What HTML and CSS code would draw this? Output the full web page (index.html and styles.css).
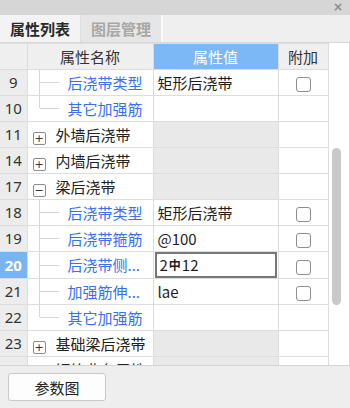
FILE: index.html
```html
<!DOCTYPE html>
<html lang="zh-CN">
<head>
    <meta charset="UTF-8">
    <title>属性列表</title>
    <link rel="stylesheet" href="styles.css">
</head>
<body>
    <div class="panel">
        <div class="titlebar"><span class="close">×</span></div>

        <div class="tabs">
            <div class="tab active">属性列表</div>
            <div class="tab">图层管理</div>
        </div>

        <div class="grid-wrap">
            <table class="grid">
                <colgroup>
                    <col class="c-num"><col class="c-name"><col class="c-val"><col class="c-add">
                </colgroup>
                <thead>
                    <tr>
                        <th></th>
                        <th>属性名称</th>
                        <th class="hl">属性值</th>
                        <th>附加</th>
                    </tr>
                </thead>
                <tbody>
                    <tr>
                        <td class="num">9</td>
                        <td class="name child"><span class="tree"></span>后浇带类型</td>
                        <td class="val">矩形后浇带</td>
                        <td class="add"><span class="check"></span></td>
                    </tr>
                    <tr>
                        <td class="num">10</td>
                        <td class="name child"><span class="tree last"></span>其它加强筋</td>
                        <td class="val"></td>
                        <td class="add"></td>
                    </tr>
                    <tr>
                        <td class="num">11</td>
                        <td class="name group"><span class="toggle">+</span>外墙后浇带</td>
                        <td class="val grey"></td>
                        <td class="add"></td>
                    </tr>
                    <tr>
                        <td class="num">14</td>
                        <td class="name group"><span class="toggle">+</span>内墙后浇带</td>
                        <td class="val grey"></td>
                        <td class="add"></td>
                    </tr>
                    <tr>
                        <td class="num">17</td>
                        <td class="name group"><span class="toggle">−</span>梁后浇带</td>
                        <td class="val grey"></td>
                        <td class="add"></td>
                    </tr>
                    <tr>
                        <td class="num">18</td>
                        <td class="name child"><span class="tree"></span>后浇带类型</td>
                        <td class="val">矩形后浇带</td>
                        <td class="add"><span class="check"></span></td>
                    </tr>
                    <tr>
                        <td class="num">19</td>
                        <td class="name child"><span class="tree"></span>后浇带箍筋</td>
                        <td class="val">@100</td>
                        <td class="add"><span class="check"></span></td>
                    </tr>
                    <tr class="current">
                        <td class="num">20</td>
                        <td class="name child"><span class="tree"></span>后浇带侧...</td>
                        <td class="val editing"><div class="editor">2<span class="steel">中</span>12</div></td>
                        <td class="add"><span class="check"></span></td>
                    </tr>
                    <tr>
                        <td class="num">21</td>
                        <td class="name child"><span class="tree"></span>加强筋伸...</td>
                        <td class="val">lae</td>
                        <td class="add"><span class="check"></span></td>
                    </tr>
                    <tr>
                        <td class="num">22</td>
                        <td class="name child"><span class="tree last"></span>其它加强筋</td>
                        <td class="val"></td>
                        <td class="add"></td>
                    </tr>
                    <tr>
                        <td class="num">23</td>
                        <td class="name group"><span class="toggle">+</span>基础梁后浇带</td>
                        <td class="val grey"></td>
                        <td class="add"></td>
                    </tr>
                    <tr>
                        <td class="num">33</td>
                        <td class="name group"><span class="toggle">+</span>钢筋业务属性</td>
                        <td class="val grey"></td>
                        <td class="add"></td>
                    </tr>
                </tbody>
            </table>
            <div class="scrollbar"><div class="thumb"></div></div>
        </div>

        <div class="footer">
            <button class="btn">参数图</button>
        </div>
    </div>
</body>
</html>
```

FILE: styles.css
```css
body {
    margin: 0;
    padding: 0;
    font-family: "Noto Sans CJK SC", "Noto Sans", sans-serif;
    font-size: 15px;
    color: #222222;
    background: #eeeeee;
}

.panel {
    width: 350px;
    height: 408px;
    display: flex;
    flex-direction: column;
    overflow: hidden;
}

.titlebar {
    height: 15px;
    background: #d6d6d6;
    display: flex;
    justify-content: flex-end;
    align-items: center;
    padding-right: 7px;
}

.close {
    font-family: "DejaVu Sans", sans-serif;
    font-size: 12px;
    font-weight: bold;
    color: #8a8a8a;
    line-height: 1;
}

.tabs {
    height: 27px;
    display: flex;
    background: #efefef;
    border-bottom: 1px solid #d8d8d8;
}

.tab {
    width: 80px;
    display: flex;
    align-items: center;
    justify-content: center;
    font-weight: bold;
    color: #a8a8a8;
    background: #e6e6e6;
    border-right: 2px solid #fafafa;
}

.tab.active {
    width: 80px;
    color: #2a2a2a;
    background: #f3f3f3;
    border-right: 1px solid #dddddd;
}

.grid-wrap {
    height: 325px;
    display: flex;
    background: #ffffff;
    border-bottom: 1px solid #d4d4d4;
    overflow: hidden;
}

.grid {
    width: 328px;
    table-layout: fixed;
    border-collapse: collapse;
    align-self: flex-start;
}

.c-num { width: 27px; }
.c-name { width: 126px; }
.c-val { width: 125px; }
.c-add { width: 50px; }

.grid th,
.grid td {
    height: 25px;
    padding: 0;
    border: 1px solid #dddddd;
    white-space: nowrap;
    overflow: hidden;
}

.grid tr > :first-child { border-left: none; }

.grid th {
    font-weight: normal;
    background: #efefef;
    color: #333333;
    text-align: center;
}

.grid th.hl {
    background: #7cb8f5;
    color: #ffffff;
}

.num {
    background: #ececec;
    text-align: center;
    color: #333333;
    font-family: "Noto Sans", sans-serif;
}

.current .num {
    background: #78b4f2;
    color: #ffffff;
    font-weight: bold;
}

.name {
    position: relative;
}

.name.child {
    padding-left: 40px !important;
    color: #3a6ff0;
}

.name.group {
    padding-left: 5px !important;
}

.tree {
    position: absolute;
    left: 11px;
    top: 0;
    width: 19px;
    height: 100%;
    border-left: 1px solid #d6d6d6;
}

.tree::after {
    content: "";
    position: absolute;
    left: 0;
    top: 50%;
    width: 19px;
    border-top: 1px solid #d6d6d6;
}

.tree.last {
    height: 50%;
}

.tree.last::after {
    top: 100%;
}

.toggle {
    display: inline-flex;
    align-items: center;
    justify-content: center;
    width: 11px;
    height: 11px;
    margin-right: 10px;
    border: 1px solid #8c8c8c;
    border-radius: 2px;
    font-family: "DejaVu Sans", sans-serif;
    font-size: 11px;
    line-height: 1;
    color: #333333;
    vertical-align: -1px;
}

.val {
    padding-left: 4px !important;
    color: #1e1e1e;
}

.val.grey {
    background: #e9e9e9;
}

.val.editing {
    padding: 0 !important;
}

.editor {
    height: 22px;
    margin: 0 1px;
    padding-left: 3px;
    border: 2px solid #777777;
    display: flex;
    align-items: center;
}

.steel {
    font-size: 12px;
    font-weight: bold;
    margin: 0 1px;
}

.add {
    text-align: center;
}

.check {
    display: inline-block;
    width: 13px;
    height: 13px;
    border: 1px solid #8e8e8e;
    border-radius: 3px;
    vertical-align: middle;
}

.scrollbar {
    width: 21px;
    border-right: 1px solid #d8d8d8;
    display: flex;
    flex-direction: column;
    align-items: center;
    padding-top: 105px;
}

.thumb {
    width: 9px;
    height: 157px;
    margin-left: -4px;
    border-radius: 5px;
    background: #c9c9c9;
}

.footer {
    flex: 1;
    background: #eeeeee;
    padding: 7px 8px;
}

.btn {
    width: 98px;
    height: 28px;
    background: #fdfdfd;
    border: 1px solid #c9c9c9;
    border-radius: 3px;
    font-family: "Noto Sans CJK SC", sans-serif;
    font-size: 15px;
    color: #222222;
    padding: 0;
}
```
